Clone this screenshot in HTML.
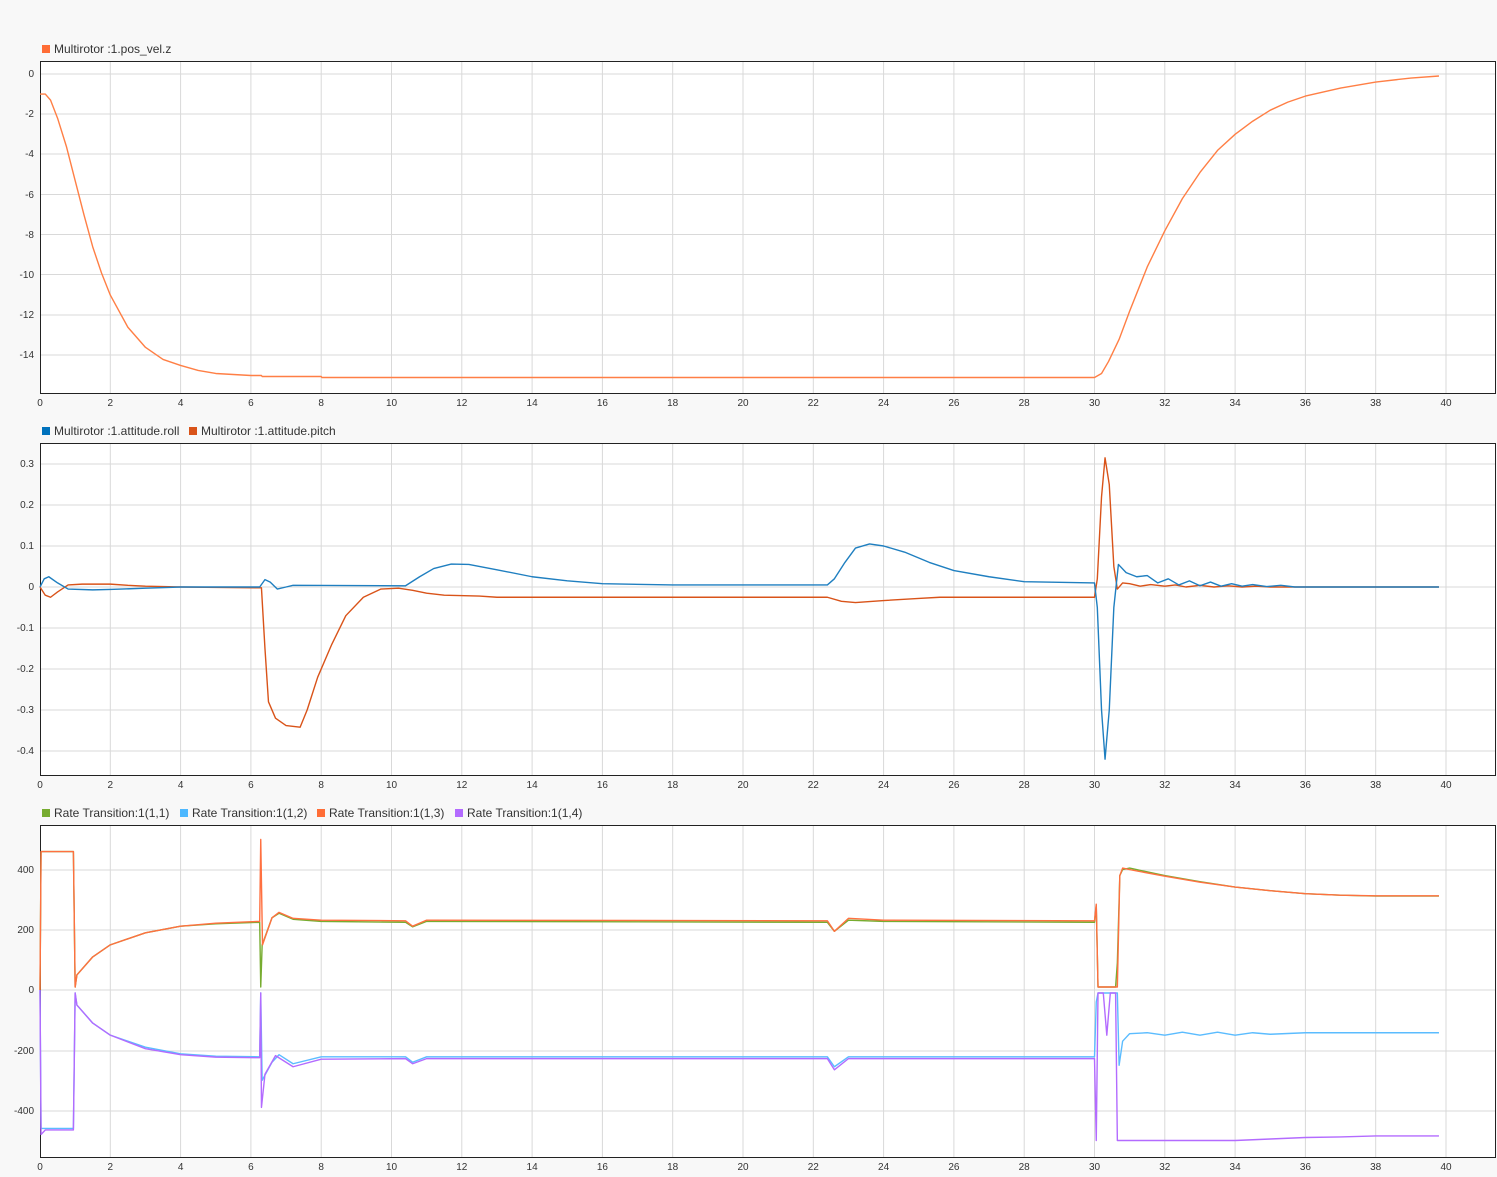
<!DOCTYPE html>
<html><head><meta charset="utf-8"><style>
html,body{margin:0;padding:0;background:#f8f8f8;}
svg{display:block;font-family:"Liberation Sans",sans-serif;}
.g line{stroke:#d9d9d9;stroke-width:1}
.t{font-size:10px;fill:#333}
.lg{font-size:12px;fill:#333}
.d{fill:none;stroke-width:1.4;vector-effect:non-scaling-stroke;stroke-linejoin:round}
</style></head><body>
<svg width="1497" height="1177" viewBox="0 0 1497 1177">
<!-- Plot boxes -->
<rect x="40.5" y="61.5" width="1455" height="332" fill="#fff" stroke="#222"/>
<rect x="40.5" y="443.5" width="1455" height="332" fill="#fff" stroke="#222"/>
<rect x="40.5" y="825.5" width="1455" height="332" fill="#fff" stroke="#222"/>
<g class="g">
<!-- vertical grids for each plot -->
<g id="vg">
<line x1="110.3" x2="110.3" y1="62" y2="393"/><line x1="180.6" x2="180.6" y1="62" y2="393"/><line x1="250.9" x2="250.9" y1="62" y2="393"/><line x1="321.2" x2="321.2" y1="62" y2="393"/><line x1="391.5" x2="391.5" y1="62" y2="393"/><line x1="461.8" x2="461.8" y1="62" y2="393"/><line x1="532.1" x2="532.1" y1="62" y2="393"/><line x1="602.4" x2="602.4" y1="62" y2="393"/><line x1="672.7" x2="672.7" y1="62" y2="393"/><line x1="743" x2="743" y1="62" y2="393"/><line x1="813.3" x2="813.3" y1="62" y2="393"/><line x1="883.6" x2="883.6" y1="62" y2="393"/><line x1="953.9" x2="953.9" y1="62" y2="393"/><line x1="1024.2" x2="1024.2" y1="62" y2="393"/><line x1="1094.5" x2="1094.5" y1="62" y2="393"/><line x1="1164.8" x2="1164.8" y1="62" y2="393"/><line x1="1235.1" x2="1235.1" y1="62" y2="393"/><line x1="1305.4" x2="1305.4" y1="62" y2="393"/><line x1="1375.7" x2="1375.7" y1="62" y2="393"/><line x1="1446" x2="1446" y1="62" y2="393"/>
</g>
<use href="#vg" y="382"/><use href="#vg" y="764"/>
<!-- horizontal plot1 -->
<line x1="41" x2="1495" y1="74" y2="74"/><line x1="41" x2="1495" y1="114" y2="114"/><line x1="41" x2="1495" y1="154" y2="154"/><line x1="41" x2="1495" y1="194.5" y2="194.5"/><line x1="41" x2="1495" y1="234.5" y2="234.5"/><line x1="41" x2="1495" y1="274.5" y2="274.5"/><line x1="41" x2="1495" y1="315" y2="315"/><line x1="41" x2="1495" y1="355" y2="355"/>
<!-- plot2 -->
<line x1="41" x2="1495" y1="464" y2="464"/><line x1="41" x2="1495" y1="505" y2="505"/><line x1="41" x2="1495" y1="546" y2="546"/><line x1="41" x2="1495" y1="587" y2="587"/><line x1="41" x2="1495" y1="628" y2="628"/><line x1="41" x2="1495" y1="669" y2="669"/><line x1="41" x2="1495" y1="710" y2="710"/><line x1="41" x2="1495" y1="751" y2="751"/>
<!-- plot3 -->
<line x1="41" x2="1495" y1="870" y2="870"/><line x1="41" x2="1495" y1="930" y2="930"/><line x1="41" x2="1495" y1="990" y2="990"/><line x1="41" x2="1495" y1="1051" y2="1051"/><line x1="41" x2="1495" y1="1111" y2="1111"/>
</g>
<!-- x tick labels -->
<g class="t" text-anchor="middle" id="xl">
<text x="40" y="406">0</text><text x="110.3" y="406">2</text><text x="180.6" y="406">4</text><text x="250.9" y="406">6</text><text x="321.2" y="406">8</text><text x="391.5" y="406">10</text><text x="461.8" y="406">12</text><text x="532.1" y="406">14</text><text x="602.4" y="406">16</text><text x="672.7" y="406">18</text><text x="743" y="406">20</text><text x="813.3" y="406">22</text><text x="883.6" y="406">24</text><text x="953.9" y="406">26</text><text x="1024.2" y="406">28</text><text x="1094.5" y="406">30</text><text x="1164.8" y="406">32</text><text x="1235.1" y="406">34</text><text x="1305.4" y="406">36</text><text x="1375.7" y="406">38</text><text x="1446" y="406">40</text>
</g>
<use href="#xl" y="382"/><use href="#xl" y="764"/>
<!-- y tick labels -->
<g class="t" text-anchor="end">
<text x="34" y="77">0</text><text x="34" y="117">-2</text><text x="34" y="157">-4</text><text x="34" y="198">-6</text><text x="34" y="238">-8</text><text x="34" y="278">-10</text><text x="34" y="318">-12</text><text x="34" y="358">-14</text>
<text x="34" y="467">0.3</text><text x="34" y="508">0.2</text><text x="34" y="549">0.1</text><text x="34" y="590">0</text><text x="34" y="631">-0.1</text><text x="34" y="672">-0.2</text><text x="34" y="713">-0.3</text><text x="34" y="754">-0.4</text>
<text x="34" y="873">400</text><text x="34" y="933">200</text><text x="34" y="993">0</text><text x="34" y="1054">-200</text><text x="34" y="1114">-400</text>
</g>
<!-- legends -->
<rect x="42" y="45" width="8" height="8" fill="#ff6d36"/><text class="lg" x="54" y="53">Multirotor :1.pos_vel.z</text>
<rect x="42" y="427" width="8" height="8" fill="#0072bd"/><text class="lg" x="54" y="435">Multirotor :1.attitude.roll</text>
<rect x="189" y="427" width="8" height="8" fill="#d95319"/><text class="lg" x="201" y="435">Multirotor :1.attitude.pitch</text>
<rect x="42" y="809" width="8" height="8" fill="#77ac30"/><text class="lg" x="54" y="817">Rate Transition:1(1,1)</text>
<rect x="180" y="809" width="8" height="8" fill="#4db8ff"/><text class="lg" x="192" y="817">Rate Transition:1(1,2)</text>
<rect x="317" y="809" width="8" height="8" fill="#ff6d36"/><text class="lg" x="329" y="817">Rate Transition:1(1,3)</text>
<rect x="455" y="809" width="8" height="8" fill="#b36bff"/><text class="lg" x="467" y="817">Rate Transition:1(1,4)</text>

<!-- Plot1 data -->
<g transform="translate(40,74) scale(35.15,-20.1)">
<path class="d" stroke="#ff7f45" d="M0,-1 L0.15,-1 L0.3,-1.3 L0.5,-2.2 L0.75,-3.6 L1,-5.3 L1.25,-7 L1.5,-8.6 L1.75,-9.9 L2,-11 L2.5,-12.6 L3,-13.6 L3.5,-14.2 L4,-14.5 L4.5,-14.75 L5,-14.9 L6,-15 L6.3,-15 L6.32,-15.05 L8,-15.05 L8.02,-15.1 L30,-15.1 L30.2,-14.9 L30.4,-14.3 L30.7,-13.2 L31,-11.8 L31.5,-9.6 L32,-7.8 L32.5,-6.2 L33,-4.9 L33.5,-3.8 L34,-3 L34.5,-2.35 L35,-1.8 L35.5,-1.4 L36,-1.1 L37,-0.7 L38,-0.4 L39,-0.2 L39.8,-0.1"/>
</g>
<!-- Plot2 data -->
<g transform="translate(40,587) scale(35.15,-410)">
<path class="d" stroke="#d95319" d="M0,0 L0.15,-0.02 L0.3,-0.025 L0.5,-0.012 L0.8,0.005 L1.2,0.007 L2,0.007 L2.5,0.004 L3,0.002 L4,0 L6.3,-0.002 L6.4,-0.15 L6.5,-0.28 L6.7,-0.32 L7,-0.338 L7.4,-0.342 L7.6,-0.3 L7.9,-0.22 L8.3,-0.14 L8.7,-0.07 L9.2,-0.025 L9.7,-0.005 L10.2,-0.003 L10.6,-0.008 L11,-0.015 L11.5,-0.02 L12.5,-0.022 L13,-0.025 L22.4,-0.025 L22.8,-0.035 L23.2,-0.038 L24,-0.033 L25,-0.028 L25.6,-0.025 L30,-0.025 L30.08,0.02 L30.2,0.22 L30.3,0.315 L30.42,0.25 L30.55,0.05 L30.65,-0.005 L30.8,0.01 L31,0.008 L31.3,0.002 L31.6,0.006 L32,0.002 L32.3,0.005 L32.6,0 L33,0.004 L33.4,0 L33.8,0.003 L34.2,0 L34.6,0.002 L35,0 L39.8,0"/>
<path class="d" stroke="#1f7fc0" d="M0,0 L0.12,0.02 L0.25,0.025 L0.5,0.01 L0.8,-0.005 L1.5,-0.007 L2,-0.006 L3,-0.003 L4,0 L6.25,0 L6.4,0.018 L6.55,0.012 L6.75,-0.005 L7,0 L7.2,0.004 L10.4,0.003 L10.8,0.025 L11.2,0.045 L11.7,0.056 L12.2,0.055 L13,0.042 L14,0.025 L15,0.015 L16,0.008 L18,0.005 L22.4,0.005 L22.6,0.02 L22.9,0.06 L23.2,0.095 L23.6,0.105 L24,0.1 L24.6,0.085 L25.3,0.06 L26,0.04 L27,0.025 L28,0.013 L30,0.01 L30.08,-0.05 L30.2,-0.3 L30.3,-0.42 L30.42,-0.3 L30.55,-0.05 L30.68,0.055 L30.9,0.035 L31.2,0.025 L31.5,0.028 L31.8,0.01 L32.1,0.02 L32.4,0.005 L32.7,0.015 L33,0.003 L33.3,0.012 L33.6,0.002 L33.9,0.008 L34.2,0.002 L34.5,0.006 L34.9,0.001 L35.3,0.004 L35.7,0 L39.8,0"/>
</g>
<!-- Plot3 data -->
<g transform="translate(40,990) scale(35.15,-0.301)">
<path class="d" stroke="#77ac30" d="M0,0 L0.03,460 L0.95,460 L1,10 L1.05,50 L1.5,110 L2,150 L3,190 L4,212 L5,220 L6.25,225 L6.28,10 L6.32,150 L6.6,240 L6.8,255 L7.2,235 L8,228 L10.4,225 L10.6,210 L11,228 L22.4,225 L22.6,195 L23,232 L24,228 L30,225 L30.05,280 L30.1,10 L30.6,10 L30.65,90 L30.72,380 L30.8,400 L31,405 L32,380 L33,360 L34,342 L35,330 L36,320 L37,315 L38,312 L39.8,312"/>
<path class="d" stroke="#ff7040" d="M0,0 L0.03,460 L0.95,460 L1,10 L1.05,50 L1.5,110 L2,150 L3,190 L4,212 L5,222 L6.25,228 L6.28,500 L6.33,150 L6.6,240 L6.8,258 L7.2,238 L8,232 L10.4,230 L10.6,212 L11,232 L22.4,230 L22.6,195 L23,238 L24,232 L30,230 L30.05,285 L30.1,10 L30.65,10 L30.72,380 L30.8,405 L31,400 L32,378 L33,358 L34,342 L35,330 L36,320 L37,315 L38,313 L39.8,313"/>
<path class="d" stroke="#5bbcff" d="M0,0 L0.03,-460 L0.95,-460 L1,-10 L1.05,-50 L1.5,-110 L2,-150 L3,-190 L4,-212 L5,-220 L6.25,-222 L6.28,-10 L6.32,-300 L6.6,-240 L6.8,-215 L7.2,-245 L8,-222 L10.4,-222 L10.6,-240 L11,-222 L22.4,-222 L22.6,-255 L23,-222 L30,-222 L30.05,-40 L30.1,-10 L30.65,-10 L30.7,-250 L30.8,-170 L31,-145 L31.5,-142 L32,-150 L32.5,-140 L33,-150 L33.5,-140 L34,-150 L34.5,-142 L35,-147 L36,-142 L39.8,-142"/>
<path class="d" stroke="#b36bff" d="M0,0 L0.03,-480 L0.15,-465 L0.95,-465 L1,-10 L1.05,-50 L1.5,-110 L2,-150 L3,-195 L4,-215 L5,-223 L6.25,-225 L6.28,-10 L6.3,-390 L6.4,-280 L6.7,-218 L7.2,-255 L8,-230 L10.4,-228 L10.6,-245 L11,-228 L22.4,-228 L22.6,-265 L23,-228 L30,-228 L30.05,-500 L30.1,-10 L30.25,-10 L30.35,-150 L30.45,-10 L30.6,-10 L30.65,-500 L34,-500 L35,-495 L36,-490 L37,-488 L38,-485 L39.8,-485"/>
</g>
</svg>
</body></html>
